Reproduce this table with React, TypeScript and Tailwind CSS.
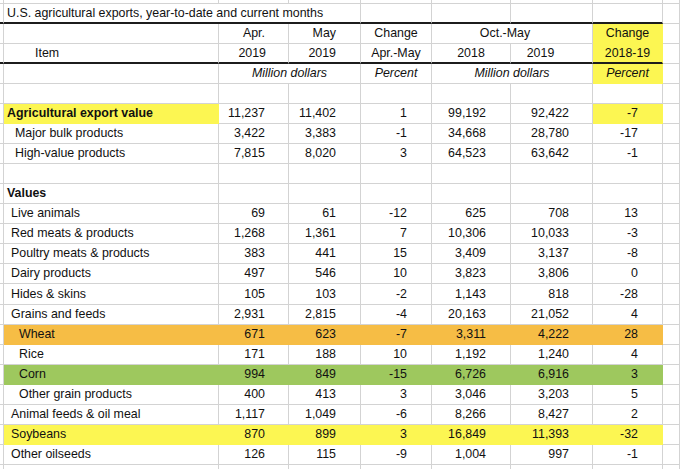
import React from 'react';

type Fill = 'yellow' | 'orange' | 'green';

type Row = {
  label: string;
  vals?: string[];
  bold?: boolean;
  indent?: number;
  fill?: Fill;
  tall?: boolean;
};

const GRID = 'border-[#d3d3d3]';
const FILLS: Record<Fill, string> = {
  yellow: 'bg-[#fcf652] border-[#fcf652]',
  orange: 'bg-[#f6bd45] border-[#f6bd45]',
  green: 'bg-[#9ec85e] border-[#9ec85e]',
};
const INDENTS = ['pl-[3px]', 'pl-[7px]', 'pl-[11px]', 'pl-[15px]'];
const COLS = 'grid grid-cols-[4px_215px_70px_72px_71px_79px_82px_70px_17px]';

const rows: Row[] = [
  { label: 'Agricultural export value', bold: true, vals: ['11,237', '11,402', '1', '99,192', '92,422', '-7'] },
  { label: 'Major bulk products', indent: 2, vals: ['3,422', '3,383', '-1', '34,668', '28,780', '-17'] },
  { label: 'High-value products', indent: 2, vals: ['7,815', '8,020', '3', '64,523', '63,642', '-1'] },
  { label: '' },
  { label: 'Values', bold: true },
  { label: 'Live animals', indent: 1, vals: ['69', '61', '-12', '625', '708', '13'] },
  { label: 'Red meats & products', indent: 1, vals: ['1,268', '1,361', '7', '10,306', '10,033', '-3'] },
  { label: 'Poultry meats & products', indent: 1, vals: ['383', '441', '15', '3,409', '3,137', '-8'] },
  { label: 'Dairy products', indent: 1, vals: ['497', '546', '10', '3,823', '3,806', '0'] },
  { label: 'Hides & skins', indent: 1, tall: true, vals: ['105', '103', '-2', '1,143', '818', '-28'] },
  { label: 'Grains and feeds', indent: 1, vals: ['2,931', '2,815', '-4', '20,163', '21,052', '4'] },
  { label: 'Wheat', indent: 3, fill: 'orange', vals: ['671', '623', '-7', '3,311', '4,222', '28'] },
  { label: 'Rice', indent: 3, vals: ['171', '188', '10', '1,192', '1,240', '4'] },
  { label: 'Corn', indent: 3, fill: 'green', vals: ['994', '849', '-15', '6,726', '6,916', '3'] },
  { label: 'Other grain products', indent: 3, vals: ['400', '413', '3', '3,046', '3,203', '5'] },
  { label: 'Animal feeds & oil meal', indent: 1, vals: ['1,117', '1,049', '-6', '8,266', '8,427', '2'] },
  { label: 'Soybeans', indent: 1, fill: 'yellow', vals: ['870', '899', '3', '16,849', '11,393', '-32'] },
  { label: 'Other oilseeds', indent: 1, vals: ['126', '115', '-9', '1,004', '997', '-1'] },
];

// pads so numbers sit where the sheet puts them
const VAL_PAD = ['pr-[23px]', 'pr-[24px]', 'pr-[24px]', 'pr-[24px]', 'pr-[23px]', 'pr-[24px]'];

const cell = 'flex items-center border-r border-b';

const DataRow: React.FC<{ row: Row }> = ({ row }) => {
  const isAg = row.label === 'Agricultural export value';
  const rowFill = row.fill ? FILLS[row.fill] : GRID;
  const labelFill = isAg ? FILLS.yellow : rowFill;
  return (
    <div className={`${COLS} ${row.tall ? 'h-[21px]' : 'h-[20px]'}`}>
      <div className={`${cell} ${GRID}`} />
      <div className={`${cell} ${labelFill} ${INDENTS[row.indent ?? 0]} ${row.bold ? 'font-bold' : ''} whitespace-nowrap`}>
        {row.label}
      </div>
      {[0, 1, 2, 3, 4, 5].map((i) => {
        const f = isAg && i === 5 ? FILLS.yellow : rowFill;
        return (
          <div key={i} className={`${cell} ${f} justify-end ${VAL_PAD[i]}`}>
            {row.vals?.[i] ?? ''}
          </div>
        );
      })}
      <div className={`${cell} ${GRID}`} />
    </div>
  );
};

const App: React.FC = () => {
  const thick = 'border-b-2 border-b-[#1c1c1c]';
  return (
    <div className="w-[680px] h-[469px] overflow-hidden bg-white text-[12.4px] leading-none text-[#111] font-['Liberation_Sans',Arial,sans-serif]">
      {/* row above the sheet */}
      <div className={`${COLS} h-[4px]`}>
        {[0, 1, 2, 3, 4, 5, 6, 7, 8].map((i) => (
          <div key={i} className={`border-r border-b ${GRID}`} />
        ))}
      </div>

      {/* Title */}
      <div className={`${COLS} h-[20px]`}>
        <div className={`${cell} ${GRID} ${thick}`} />
        <div className={`${cell} ${GRID} ${thick} col-span-3 pl-[3px] whitespace-nowrap`}>
          U.S. agricultural exports, year-to-date and current months
        </div>
        {[4, 5, 6, 7].map((i) => (
          <div key={i} className={`${cell} ${GRID} ${thick}`} />
        ))}
        <div className={`${cell} ${GRID}`} />
      </div>

      {/* Header line 1 */}
      <div className={`${COLS} h-[20px]`}>
        <div className={`${cell} ${GRID}`} />
        <div className={`${cell} ${GRID}`} />
        <div className={`${cell} ${GRID} justify-end pr-[23px]`}>Apr.</div>
        <div className={`${cell} ${GRID} justify-end pr-[24px]`}>May</div>
        <div className={`${cell} ${GRID} justify-center`}>Change</div>
        <div className={`${cell} ${GRID} col-span-2 justify-center pr-[14px]`}>Oct.-May</div>
        <div className={`${cell} ${FILLS.yellow} justify-center`}>Change</div>
        <div className={`${cell} ${GRID}`} />
      </div>

      {/* Header line 2 */}
      <div className={`${COLS} h-[20px]`}>
        <div className={`${cell} ${GRID} ${thick}`} />
        <div className={`${cell} ${GRID} ${thick} pl-[31px]`}>Item</div>
        <div className={`${cell} ${GRID} ${thick} justify-end pr-[22px]`}>2019</div>
        <div className={`${cell} ${GRID} ${thick} justify-end pr-[24px]`}>2019</div>
        <div className={`${cell} ${GRID} ${thick} justify-center`}>Apr.-May</div>
        <div className={`${cell} ${GRID} ${thick} justify-center`}>2018</div>
        <div className={`${cell} ${GRID} ${thick} justify-center pr-[22px]`}>2019</div>
        <div className={`${cell} ${FILLS.yellow} ${thick} justify-center`}>2018-19</div>
        <div className={`${cell} ${GRID}`} />
      </div>

      {/* Units */}
      <div className={`${COLS} h-[20px] italic`}>
        <div className={`${cell} ${GRID}`} />
        <div className={`${cell} ${GRID}`} />
        <div className={`${cell} ${GRID} col-span-2 justify-center`}>Million dollars</div>
        <div className={`${cell} ${GRID} justify-center`}>Percent</div>
        <div className={`${cell} ${GRID} col-span-2 justify-center`}>Million dollars</div>
        <div className={`${cell} ${FILLS.yellow} justify-center`}>Percent</div>
        <div className={`${cell} ${GRID}`} />
      </div>

      {/* Spacer row */}
      <div className={`${COLS} h-[20px]`}>
        {[0, 1, 2, 3, 4, 5, 6, 7, 8].map((i) => (
          <div key={i} className={`${cell} ${GRID}`} />
        ))}
      </div>

      {rows.map((row, idx) => (
        <DataRow key={idx} row={row} />
      ))}

      <div className={`${COLS} h-[20px]`}>
        {[0, 1, 2, 3, 4, 5, 6, 7, 8].map((i) => (
          <div key={i} className={`${cell} ${GRID}`} />
        ))}
      </div>
    </div>
  );
};

export default App;
